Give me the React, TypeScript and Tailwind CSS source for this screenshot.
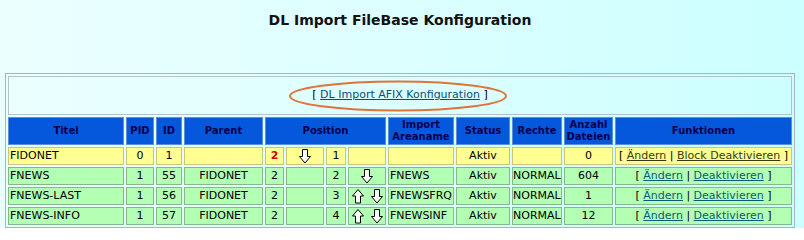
import React from 'react';

const font = "font-['DejaVu_Sans',Verdana,sans-serif]";

function ArrowDown() {
    return (
        <svg width="12" height="15" viewBox="0 0 12 15" className="inline-block align-middle">
            <polygon points="3.5,0.5 8.5,0.5 8.5,7.5 11.5,7.5 6,14 0.5,7.5 3.5,7.5" fill="#fff" stroke="#000" strokeWidth="1" />
        </svg>
    );
}

function ArrowUp() {
    return (
        <svg width="12" height="15" viewBox="0 0 12 15" className="inline-block align-middle">
            <polygon points="6,0.5 11.5,7 8.5,7 8.5,14 3.5,14 3.5,7 0.5,7" fill="#fff" stroke="#000" strokeWidth="1" />
        </svg>
    );
}

type Row = {
    titel: string;
    pid: string;
    id: string;
    parent: string;
    pos: string;
    down1: boolean;
    order: string;
    up: boolean;
    down: boolean;
    area: string;
    rechte: string;
    anzahl: string;
    block?: boolean;
};

const rows: Row[] = [
    { titel: 'FIDONET', pid: '0', id: '1', parent: '', pos: '2', down1: true, order: '1', up: false, down: false, area: '', rechte: '', anzahl: '0', block: true },
    { titel: 'FNEWS', pid: '1', id: '55', parent: 'FIDONET', pos: '2', down1: false, order: '2', up: false, down: true, area: 'FNEWS', rechte: 'NORMAL', anzahl: '604' },
    { titel: 'FNEWS-LAST', pid: '1', id: '56', parent: 'FIDONET', pos: '2', down1: false, order: '3', up: true, down: true, area: 'FNEWSFRQ', rechte: 'NORMAL', anzahl: '1' },
    { titel: 'FNEWS-INFO', pid: '1', id: '57', parent: 'FIDONET', pos: '2', down1: false, order: '4', up: true, down: true, area: 'FNEWSINF', rechte: 'NORMAL', anzahl: '12' },
];

export default function App() {
    const th = 'h-[28px] p-0 bg-[#0557dc] border border-[#5c8fd6] text-[#00004f] text-[10px] font-bold leading-[12px] text-center align-middle';

    return (
        <div className={`min-h-[210px] w-full bg-gradient-to-r from-[#ecffff] to-[#ccffff] ${font}`}>
            <div className="ml-[5px] w-[790px]">
                <h1 className="pt-[12px] pb-[44px] text-center text-[14px] font-bold leading-[17px] text-[#111]">
                    DL Import FileBase Konfiguration
                </h1>

                <table className="w-[790px] table-fixed border-separate border-spacing-[2px] border border-[#a3b6c2] text-[11px] text-black">
                    <colgroup>
                        <col className="w-[116px]" />
                        <col className="w-[28px]" />
                        <col className="w-[26px]" />
                        <col className="w-[79px]" />
                        <col className="w-[19px]" />
                        <col className="w-[38px]" />
                        <col className="w-[20px]" />
                        <col className="w-[38px]" />
                        <col className="w-[66px]" />
                        <col className="w-[54px]" />
                        <col className="w-[50px]" />
                        <col className="w-[49px]" />
                        <col className="w-[177px]" />
                    </colgroup>
                    <tbody>
                        <tr>
                            <td colSpan={13} className="relative h-[39px] p-0 border border-[#b3c3cb] text-center align-middle">
                                [ <a href="#" className="text-[#0a4d78] underline">DL Import AFIX Konfiguration</a> ]
                                {/* annotation circle */}
                                <svg width="222" height="34" viewBox="0 0 222 34" className="pointer-events-none absolute left-[278px] top-[2px]">
                                    <ellipse cx="111" cy="17" rx="108" ry="14.5" fill="none" stroke="#e1723a" strokeWidth="2" />
                                </svg>
                            </td>
                        </tr>
                        <tr>
                            <th className={th}>Titel</th>
                            <th className={th}>PID</th>
                            <th className={th}>ID</th>
                            <th className={th}>Parent</th>
                            <th className={th} colSpan={4}>Position</th>
                            <th className={th}>Import<br />Areaname</th>
                            <th className={th}>Status</th>
                            <th className={th}>Rechte</th>
                            <th className={th}>Anzahl<br />Dateien</th>
                            <th className={th}>Funktionen</th>
                        </tr>
                        {rows.map((r) => {
                            const bg = r.block ? 'bg-[#ffff92] border-[#c9c67a]' : 'bg-[#b3ffb3] border-[#86b98a]';
                            const td = `h-[18px] p-0 border leading-[16px] whitespace-nowrap overflow-hidden align-middle ${bg}`;
                            const link = r.block ? 'text-[#3a3a14] underline' : 'text-[#0b5a7c] underline';
                            return (
                                <tr key={r.id}>
                                    <td className={`${td} pl-[1px] text-left`}>{r.titel}</td>
                                    <td className={`${td} text-center`}>{r.pid}</td>
                                    <td className={`${td} text-center`}>{r.id}</td>
                                    <td className={`${td} text-center`}>{r.parent}</td>
                                    <td className={`${td} text-center ${r.block ? 'font-bold text-[#d40000]' : ''}`}>{r.pos}</td>
                                    <td className={`${td} text-center`}>{r.down1 && <ArrowDown />}</td>
                                    <td className={`${td} text-center`}>{r.order}</td>
                                    <td className={`${td} text-center`}>
                                        <span className="inline-flex items-center gap-[7px] align-middle">
                                            {r.up && <ArrowUp />}
                                            {r.down && <ArrowDown />}
                                        </span>
                                    </td>
                                    <td className={`${td} pl-[1px] text-left`}>{r.area}</td>
                                    <td className={`${td} text-center`}>Aktiv</td>
                                    <td className={`${td} text-left`}>{r.rechte}</td>
                                    <td className={`${td} text-center`}>{r.anzahl}</td>
                                    <td className={`${td} text-center`}>
                                        [ <a href="#" className={link}>Ändern</a> |{' '}
                                        <a href="#" className={link}>{r.block ? 'Block Deaktivieren' : 'Deaktivieren'}</a> ]
                                    </td>
                                </tr>
                            );
                        })}
                    </tbody>
                </table>
            </div>
        </div>
    );
}
